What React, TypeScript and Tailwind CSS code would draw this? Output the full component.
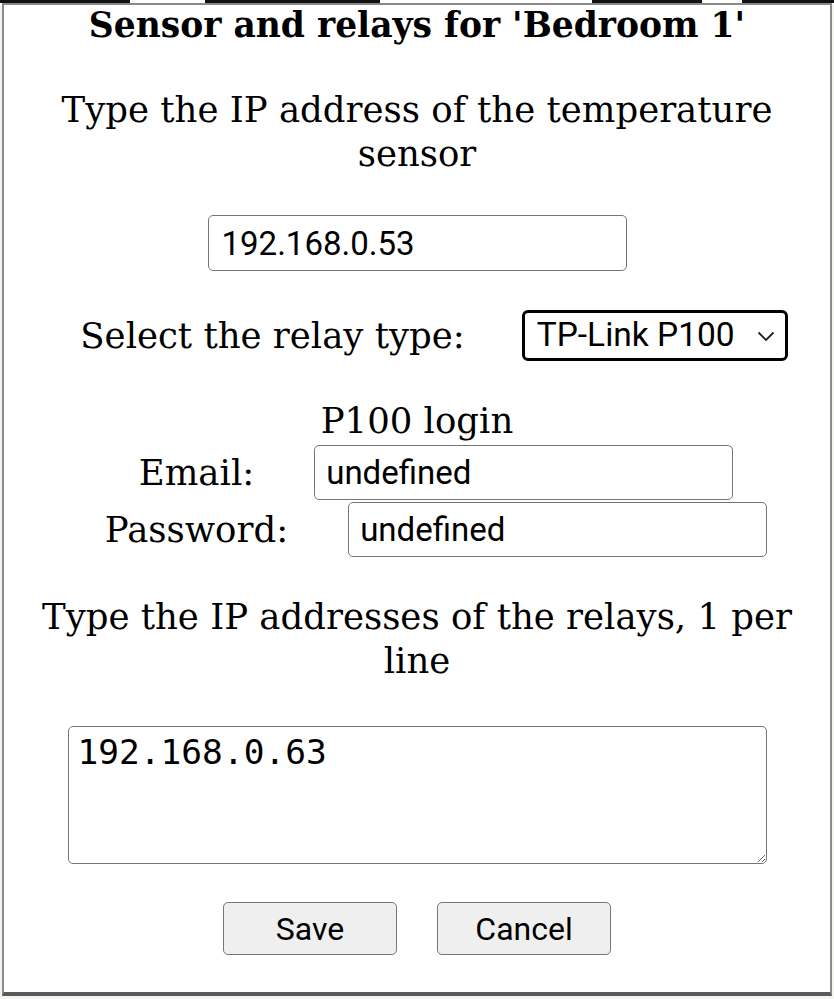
import React from "react";

export default function App() {
  return (
    <div className="relative w-[834px] h-[999px] overflow-hidden bg-[#f4f4ef] font-['DejaVu_Serif',serif] text-black">
      {/* page behind the dialog (only a sliver shows) */}
      <div className="relative h-[4px] bg-white">
        <div className="absolute left-0 top-0 w-[130px] h-[3px] bg-[#111]" />
        <div className="absolute left-[205px] top-0 w-[175px] h-[3px] bg-[#111]" />
        <div className="absolute left-[592px] top-0 w-[110px] h-[3px] bg-[#111]" />
        <div className="absolute left-[742px] top-0 w-[92px] h-[3px] bg-[#111]" />
      </div>
      {/* dialog */}
      <div className="absolute left-[2px] top-[3px] w-[830px] h-[993px] bg-white border-2 border-[#8a8a8a] border-b-[4px] border-b-[#5a5a5a] flex flex-col items-center">
        <h3 className="mt-[0px] text-[34.5px] leading-[40px] font-bold whitespace-nowrap">
          Sensor and relays for 'Bedroom 1'
        </h3>
        <p className="mt-[43px] w-[790px] text-center text-[35.5px] leading-[44px]">
          Type the IP address of the temperature sensor
        </p>
        <input
          readOnly
          value="192.168.0.53"
          className="mt-[39px] w-[419px] h-[56px] border border-[#767676] rounded-[5px] px-[13px] font-['Roboto',sans-serif] text-[33px] text-black outline-none"
        />
        <div className="mt-[39px] flex items-center pl-[34px]">
          <span className="text-[35.5px] leading-[44px]">Select the relay type:</span>
          <div className="ml-[57px] w-[266px] h-[51px] border-[3px] border-black rounded-[6px] flex items-center pl-[12px] pr-[10px] font-['Roboto',sans-serif] text-[33.5px]">
            <span className="flex-1 whitespace-nowrap">TP-Link P100</span>
            <svg width="18" height="12" viewBox="0 0 18 12" fill="none">
              <path d="M1.5 2.5 L9 10 L16.5 2.5" stroke="#222" strokeWidth="1.8" />
            </svg>
          </div>
        </div>
        <div className="mt-[38px] text-[35.5px] leading-[44px]">P100 login</div>
        <div className="flex items-center pl-[38px] mt-[2px]">
          <span className="text-[35.5px] leading-[44px]">Email:</span>
          <input
            readOnly
            value="undefined"
            className="ml-[60px] w-[419px] h-[55px] border border-[#767676] rounded-[5px] px-[11px] font-['Roboto',sans-serif] text-[33px] text-black outline-none"
          />
        </div>
        <div className="flex items-center pl-[38px] mt-[2px]">
          <span className="text-[35.5px] leading-[44px]">Password:</span>
          <input
            readOnly
            value="undefined"
            className="ml-[60px] w-[419px] h-[55px] border border-[#767676] rounded-[5px] px-[11px] font-['Roboto',sans-serif] text-[33px] text-black outline-none"
          />
        </div>
        <p className="mt-[38px] w-[800px] text-center text-[35.5px] leading-[44px]">
          Type the IP addresses of the relays, 1 per line
        </p>
        <textarea
          readOnly
          value="192.168.0.63"
          className="mt-[43px] w-[699px] h-[138px] border border-[#767676] rounded-[5px] px-[9px] py-[5px] font-['DejaVu_Sans_Mono',monospace] text-[34.5px] leading-[40px] text-black outline-none resize"
        />
        <div className="mt-[38px] flex gap-[40px] font-['Roboto',sans-serif] text-[32px]">
          <button className="w-[174px] h-[53px] bg-[#efefef] border border-[#767676] rounded-[5px]">Save</button>
          <button className="w-[174px] h-[53px] bg-[#efefef] border border-[#767676] rounded-[5px]">Cancel</button>
        </div>
      </div>
    </div>
  );
}
